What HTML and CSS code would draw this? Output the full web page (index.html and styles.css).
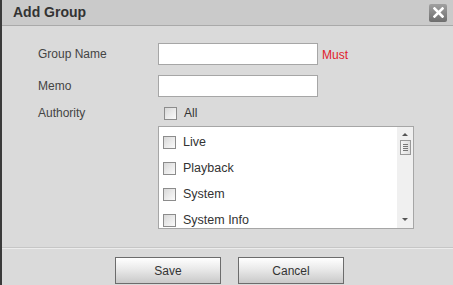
FILE: index.html
```html
<!DOCTYPE html>
<html lang="en">
<head>
  <meta charset="UTF-8" />
  <title>Add Group</title>
  <link rel="stylesheet" href="styles.css">
</head>
<body>

<div class="dialog">
  <!-- Title bar -->
  <div class="title-bar">
    <span class="title">Add Group</span>
    <span class="close">
      <svg width="11" height="11" viewBox="0 0 11 11">
        <path d="M1.5 1.5 L9.5 9.5 M9.5 1.5 L1.5 9.5" stroke="#fff" stroke-width="2.6" stroke-linecap="square"/>
      </svg>
    </span>
  </div>

  <!-- Form -->
  <div class="content">
    <div class="row">
      <label class="label">Group Name</label>
      <input class="text-input" type="text">
      <span class="must">Must</span>
    </div>
    <div class="row">
      <label class="label">Memo</label>
      <input class="text-input" type="text">
    </div>
    <div class="row auth">
      <label class="label">Authority</label>
      <span class="check-item"><span class="box"></span>All</span>
    </div>
    <div class="list-row">
      <div class="list">
        <div class="items">
          <div class="check-item"><span class="box"></span>Live</div>
          <div class="check-item"><span class="box"></span>Playback</div>
          <div class="check-item"><span class="box"></span>System</div>
          <div class="check-item"><span class="box"></span>System Info</div>
        </div>
        <div class="scrollbar">
          <span class="arrow up"></span>
          <span class="thumb"><i></i><i></i><i></i><i></i></span>
          <span class="track"></span>
          <span class="arrow down"></span>
        </div>
      </div>
    </div>
  </div>

  <!-- Buttons -->
  <div class="footer">
    <button class="btn">Save</button>
    <button class="btn">Cancel</button>
  </div>
</div>

</body>
</html>
```

FILE: styles.css
```css
body {
  margin: 0;
  font-family: "Liberation Sans", Arial, sans-serif;
  font-size: 12px;
  color: #444;
  background: #dadada;
  overflow: hidden;
}

.dialog {
  width: 451px;
  height: 285px;
  border-left: 2px solid #3a3a3a;
  background: #dadada;
  display: flex;
  flex-direction: column;
}

.title-bar {
  height: 25px;
  background: #cacaca;
  border-bottom: 1px solid #a9a9a9;
  display: flex;
  align-items: center;
  justify-content: space-between;
  padding: 0 6px 0 11px;
}

.title {
  font-size: 14px;
  font-weight: bold;
  color: #333;
  margin-top: -1px;
}

.close {
  width: 18px;
  height: 18px;
  background: linear-gradient(#a0a0a0, #6e6e6e);
  border-radius: 2px;
  display: flex;
  align-items: center;
  justify-content: center;
}

.content {
  height: 222px;
  padding-top: 17px;
  box-sizing: border-box;
  border-bottom: 1px solid #c6c6c6;
}

.row {
  display: flex;
  align-items: center;
  height: 21px;
  margin-bottom: 11px;
}

.row.auth {
  height: 12px;
  margin-top: 1px;
  margin-bottom: 7px;
}

.label {
  width: 120px;
  padding-left: 36px;
  color: #444;
}

.text-input {
  width: 160px;
  height: 22px;
  box-sizing: border-box;
  border: 1px solid #a6a6a6;
  background: #fff;
  margin: 0;
  padding: 0 3px;
}

.must {
  color: #e0202a;
  margin-left: 4px;
  margin-top: 2px;
}

.check-item {
  display: flex;
  align-items: center;
  color: #333;
}

.auth .check-item {
  margin-left: 6px;
}

.box {
  width: 11px;
  height: 11px;
  border: 1px solid #8c8c8c;
  background: linear-gradient(135deg, #d8d8d8, #fbfbfb);
  margin-right: 7px;
}

.list-row {
  padding-left: 156px;
}

.list {
  width: 256px;
  height: 103px;
  box-sizing: border-box;
  border: 1px solid #a6a6a6;
  background: #fff;
  display: flex;
  overflow: hidden;
}

.items {
  flex: 1;
  padding: 8px 0 0 4px;
}

.items .check-item {
  height: 26px;
  align-items: flex-start;
  font-size: 12.5px;
}

.items .box {
  margin-top: 1px;
}

.scrollbar {
  width: 16px;
  background: #f0f0f0;
  display: flex;
  flex-direction: column;
  align-items: center;
}

.arrow {
  width: 0;
  height: 0;
  border-left: 3px solid transparent;
  border-right: 3px solid transparent;
  margin: 6px 0 4px;
}

.arrow.up {
  border-bottom: 3px solid #555;
}

.arrow.down {
  border-top: 3px solid #555;
  margin: 4px 0 7px;
}

.thumb {
  width: 11px;
  height: 15px;
  box-sizing: border-box;
  border: 1px solid #999;
  background: linear-gradient(90deg, #f4f4f4, #dedede);
  display: flex;
  flex-direction: column;
  justify-content: center;
  align-items: center;
  gap: 1px;
}

.thumb i {
  width: 5px;
  height: 1px;
  background: #777;
}

.track {
  flex: 1;
}

.footer {
  flex: 1;
  border-top: 1px solid #ececec;
  display: flex;
  justify-content: center;
  align-items: flex-start;
  gap: 17px;
  padding-top: 8px;
  padding-left: 4px;
}

.btn {
  width: 106px;
  height: 27px;
  border: 1px solid #6c6c6c;
  background: linear-gradient(#ffffff, #e9e9e9 45%, #c9c9c9);
  font-family: "Liberation Sans", Arial, sans-serif;
  font-size: 12px;
  color: #333;
  padding: 0;
}
```
